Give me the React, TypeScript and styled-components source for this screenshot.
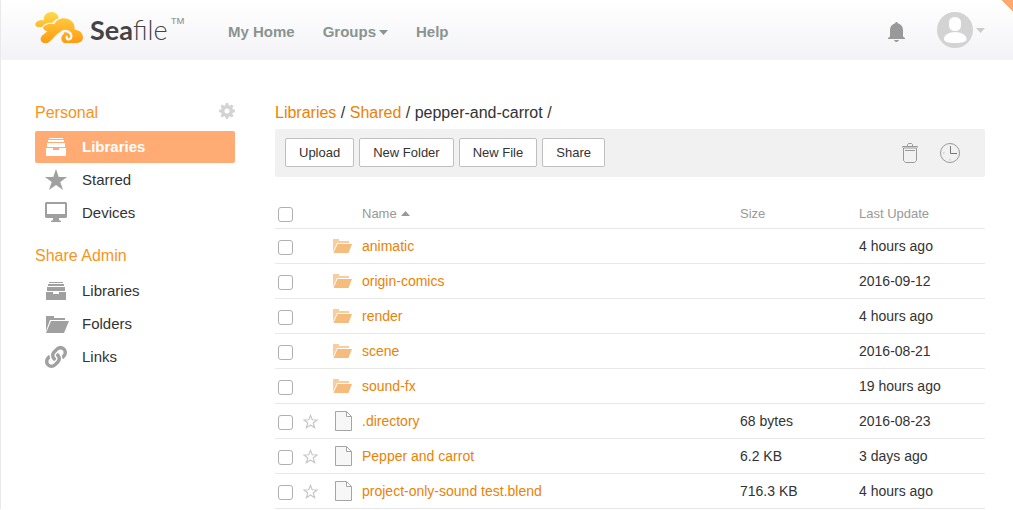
import React from "react";
import styled, { createGlobalStyle } from "styled-components";
import { FaLink } from "react-icons/fa";

const GlobalStyle = createGlobalStyle`
  *, *::before, *::after { box-sizing: border-box; }
  body {
    margin: 0;
    background: #fff;
    color: #333;
    font: 14px/20px "Liberation Sans", Arial, sans-serif;
  }
  svg { display: block; flex: none; }
  a { color: #eb8205; text-decoration: none; }
`;

const Page = styled.div`
  position: relative;
  border-left: 1px solid #e9e9ec;
  overflow: hidden;
`;

const Header = styled.header`
  display: flex;
  align-items: center;
  height: 60px;
  padding: 0 28px 0 34px;
  background: linear-gradient(#fff, #f3f3f7);
`;

const CornerFold = styled.span`
  position: absolute;
  top: 0;
  right: 0;
  width: 12px;
  height: 12px;
  background: linear-gradient(45deg, transparent 50%, #ffa870 50%);
`;

const Brand = styled.a`
  display: flex;
  align-items: center;
  gap: 7px;
  width: 193px;
  padding-bottom: 5px;
  color: #444;
  font: 300 27px/32px Lato, "Liberation Sans", sans-serif;
`;

const BrandName = styled.span`
  display: flex;
  padding-top: 4px;
  b { font-weight: 700; }
  small {
    margin-left: 2px;
    color: #999;
    font: 16px/20px "Liberation Sans", Arial, sans-serif;
  }
`;

const Nav = styled.nav`
  display: flex;
  flex: 1;
  gap: 28px;
  padding-top: 4px;
`;

const NavLink = styled.a`
  display: flex;
  align-items: center;
  gap: 3px;
  color: #8a948f;
  font-size: 15px;
  font-weight: 700;
`;

const IconButton = styled.button<{ $tone?: string }>`
  display: flex;
  align-items: center;
  gap: 3px;
  padding: 0;
  border: 0;
  background: none;
  color: ${(p) => p.$tone ?? "#999"};
  cursor: pointer;
`;

const Columns = styled.div`
  display: flex;
  gap: 40px;
  padding: 43px 28px 0 34px;
`;

const Sidebar = styled.aside`
  flex: none;
  width: 200px;
`;

const SideHeading = styled.div<{ $gap: number }>`
  display: flex;
  align-items: flex-start;
  justify-content: space-between;
  margin-bottom: ${(p) => p.$gap}px;
`;

const SideTitle = styled.h3`
  margin: 0;
  color: #f7941d;
  font-size: 16px;
  line-height: 20px;
  font-weight: 400;
`;

const SideList = styled.ul`
  display: grid;
  gap: 1px;
  margin: 0 0 17px;
  padding: 0;
  list-style: none;
`;

const SideLink = styled.a<{ $active?: boolean }>`
  display: flex;
  align-items: center;
  gap: 12px;
  height: 32px;
  padding-left: 10px;
  border-radius: 2px;
  background: ${(p) => (p.$active ? "#ffab73" : "transparent")};
  color: ${(p) => (p.$active ? "#fff" : "#333")};
  font-size: 15px;
  font-weight: ${(p) => (p.$active ? 700 : 400)};
`;

const SideIcon = styled.span<{ $active?: boolean }>`
  display: flex;
  width: 25px;
  color: ${(p) => (p.$active ? "#fff" : "#a0a0a0")};
`;

const Main = styled.main`
  flex: 1;
  min-width: 0;
`;

const Breadcrumb = styled.nav`
  margin-bottom: 6px;
  font-size: 16px;
`;

const Toolbar = styled.div`
  display: flex;
  align-items: center;
  justify-content: space-between;
  height: 48px;
  padding: 0 25px 1px 10px;
  border-radius: 2px;
  background: #f1f1f1;
`;

const ButtonGroup = styled.div<{ $gap: number }>`
  display: flex;
  align-items: center;
  gap: ${(p) => p.$gap}px;
`;

const ToolButton = styled.button`
  height: 29px;
  padding: 0 13px;
  border: 1px solid #bfbfbf;
  border-radius: 2px;
  background: #fff;
  color: #333;
  font: 13px/20px "Liberation Sans", Arial, sans-serif;
  cursor: pointer;
`;

const FileTable = styled.table`
  width: 100%;
  margin-top: 23px;
  table-layout: fixed;
  border-collapse: collapse;
`;

const Col = styled.col<{ $width?: number }>`
  width: ${(p) => (p.$width ? `${p.$width}px` : "auto")};
`;

const HeadCell = styled.th`
  height: 28px;
  padding: 0;
  border-bottom: 1px solid #e8e8e8;
  color: #999;
  font-size: 13px;
  font-weight: 400;
  text-align: left;
`;

const Cell = styled.td`
  height: 35px;
  padding: 0;
  border-bottom: 1px solid #e8e8e8;
`;

const ControlCell = styled(Cell)`
  padding-top: 2px;
`;

const SortLabel = styled.span`
  display: inline-flex;
  align-items: center;
  gap: 4px;
`;

const Check = styled.input.attrs({ type: "checkbox" })`
  display: block;
  appearance: none;
  width: 15px;
  height: 15px;
  margin: 2px 0 0 3px;
  border: 1px solid #b0b0b0;
  border-radius: 3px;
  background: #fff;
`;

const CloudLogo = () => (
  <svg width="48" height="31" viewBox="0 0 144 93" aria-hidden="true">
    <defs>
      <linearGradient id="cloudBack" x1="0" y1="0" x2="0" y2="1">
        <stop offset="0" stopColor="#ffd94f" />
        <stop offset="1" stopColor="#fdbb2c" />
      </linearGradient>
      <linearGradient id="cloudFront" x1="0" y1="0" x2="0" y2="1">
        <stop offset="0" stopColor="#ffc840" />
        <stop offset="1" stopColor="#ff9c10" />
      </linearGradient>
    </defs>
    <path fill="url(#cloudBack)" d="M9 45C2 45-1 39 2 33c3-5 9-7 16-9 3 0 6 1 8 1C25 10 36 0 49 0c12 0 21 8 22 19-9 3-15 8-19 14-12-2-23 1-31 12z" />
    <path fill="url(#cloudFront)" d="M30 93C17 93 13 79 21 71L37 58C30 57 25 52 24 46c8-10 21-13 34-9 6-15 22-22 39-17 14 4 24 17 22 33 14 0 25 11 25 23 0 11-8 17-18 17z" />
    <path fill="#f9f9fa" d="M38 93C52 84 64 62 84 56L87 65C77 71 76 86 87 93z" />
    <path fill="none" stroke="#f9f9fa" strokeWidth="7" strokeLinecap="round" d="M80 60c14-7 28 0 29 12 0 13-15 13-14 3" />
  </svg>
);

const Caret = ({ up = false }: { up?: boolean }) => (
  <svg width="9" height="5" viewBox="0 0 8 4" preserveAspectRatio="none" aria-hidden="true">
    <path fill="currentColor" d={up ? "M0 4 4 0l4 4z" : "M0 0h8L4 4z"} />
  </svg>
);

const Bell = () => (
  <svg width="17" height="24" viewBox="0 -4 17 24" fill="currentColor" aria-hidden="true">
    <path d="M7.2 1.2a1.3 1.3 0 0 1 2.6 0C13 2 15 4.500 15 8v6.500L17 16v1H0v-1l2-1.500V8c0-3.500 2-6 5.200-6.800zM6 18h5c-.5 1.300-1.300 2-2.500 2S6.500 19.300 6 18z" />
  </svg>
);

const Avatar = () => (
  <svg width="36" height="36" viewBox="0 0 36 36" aria-hidden="true">
    <circle cx="18" cy="18" r="18" fill="#d3d3d3" />
    <rect x="12" y="5" width="12" height="14" rx="5.500" fill="#fff" />
    <path fill="#fff" d="M7 27c0-4 5-7 11-7s11.500 3 11.500 7c0 3-5 4-11.500 4S7 30 7 27z" />
  </svg>
);

const Gear = () => (
  <svg width="16" height="16" viewBox="0 0 16 16" aria-hidden="true">
    <circle cx="8" cy="8" r="4.300" fill="none" stroke="#d3d3d3" strokeWidth="3.600" />
    {[0, 45, 90, 135].map((angle) => (
      <path key={angle} fill="#d3d3d3" transform={`rotate(${angle} 8 8)`} d="M6.800 0h2.400l.6 3H6.200zM6.800 16h2.400l.6-3H6.200z" />
    ))}
  </svg>
);

const Cabinet = () => (
  <svg width="22" height="18" viewBox="-1 0 22 18" fill="currentColor" aria-hidden="true">
    <path d="M3 0h14v1H3zM2 2h16v2H2zM1 5h18v4H1zM0 10h7v2h6v-2h7v8H0z" />
  </svg>
);

const Star = () => (
  <svg width="22" height="22" viewBox="0 0 22 22" fill="currentColor" aria-hidden="true">
    <path d="m11 0 2.700 8H22l-6.700 5L18 21l-7-5-7 5 2.700-8L0 8h8.300z" />
  </svg>
);

const Monitor = () => (
  <svg width="22" height="22" viewBox="0 0 22 22" fill="currentColor" aria-hidden="true">
    <path fillRule="evenodd" d="M1 0h20l1 1v14l-1 1h-7v2l2 1v1H6v-1l2-1v-2H1l-1-1V1zm1 2v10h18V2z" />
  </svg>
);

const SideFolder = () => (
  <svg width="24" height="17" viewBox="-1 0 24 17" fill="currentColor" aria-hidden="true">
    <path d="M0 0h8v2h11v2H4L0 15z" />
    <path d="M5 5h18l-5 12H0z" />
  </svg>
);

const Trash = () => (
  <svg width="16" height="20" viewBox="0 0 16 20" fill="none" stroke="#999" aria-hidden="true">
    <path d="M.5 4.500v-1h15v1M5.500 3.500v-2l1-1h3l1 1v2M1.500 5v12.500l2 2h9l2-2V5zM3 7.500h10" />
  </svg>
);

const Clock = () => (
  <svg width="20" height="20" viewBox="0 0 20 20" fill="none" stroke="#999" aria-hidden="true">
    <circle cx="10" cy="10" r="9.500" />
    <path stroke="#777" d="M10.500 3v7.500H17" />
    <path stroke="#bbb" d="M10 16v1.500M3 10h1.500" />
  </svg>
);

const TableFolder = () => (
  <svg width="19" height="14" viewBox="0 0 19 14" aria-hidden="true">
    <path fill="#f8cd9f" d="M0 0h6v2h10v2H4L0 13z" />
    <path fill="#f5bc7e" d="M4.500 5H19l-3.500 9H.5z" />
  </svg>
);

const FileIcon = () => (
  <svg width="17" height="20" viewBox="0 0 17 20" aria-hidden="true">
    <path fill="#f7f7f7" stroke="#a5a5a5" d="M.5.5h10.500l5.500 5.500v13.500H.5z" />
    <path fill="#fff" stroke="#a5a5a5" d="M11.500.5v5h5z" />
  </svg>
);

const StarOutline = () => (
  <svg width="15" height="15" viewBox="0 0 22 22" fill="none" stroke="#c6c6c6" strokeWidth="1.700" aria-hidden="true">
    <path d="m11 2 2.500 6.500 7 .3-5.500 4.400 2 6.800-6-3.900L5 20l2-6.800L1.500 8.800l7-.3z" />
  </svg>
);

const IconSlot = styled.span<{ $left: number }>`
  display: block;
  padding-left: ${(p) => p.$left}px;
`;

type SideItem = { label: string; icon: React.ReactNode; active?: boolean };

const personal: SideItem[] = [
  { label: "Libraries", icon: <Cabinet />, active: true },
  { label: "Starred", icon: <Star /> },
  { label: "Devices", icon: <Monitor /> },
];

const shareAdmin: SideItem[] = [
  { label: "Libraries", icon: <Cabinet /> },
  { label: "Folders", icon: <SideFolder /> },
  { label: "Links", icon: <FaLink size={22} /> },
];

const SideNav = ({ items }: { items: SideItem[] }) => (
  <SideList>
    {items.map((item) => (
      <li key={item.label}>
        <SideLink href="#" $active={item.active}>
          <SideIcon $active={item.active}>{item.icon}</SideIcon>
          {item.label}
        </SideLink>
      </li>
    ))}
  </SideList>
);

type Entry = { name: string; size?: string; updated: string };

const entries: Entry[] = [
  { name: "animatic", updated: "4 hours ago" },
  { name: "origin-comics", updated: "2016-09-12" },
  { name: "render", updated: "4 hours ago" },
  { name: "scene", updated: "2016-08-21" },
  { name: "sound-fx", updated: "19 hours ago" },
  { name: ".directory", size: "68 bytes", updated: "2016-08-23" },
  { name: "Pepper and carrot", size: "6.2 KB", updated: "3 days ago" },
  { name: "project-only-sound test.blend", size: "716.3 KB", updated: "4 hours ago" },
];

export default function App() {
  return (
    <Page>
      <GlobalStyle />
      <Header>
        <Brand href="#">
          <CloudLogo />
          <BrandName>
            <b>Sea</b>file<small>™</small>
          </BrandName>
        </Brand>
        <Nav>
          <NavLink href="#">My Home</NavLink>
          <NavLink href="#">
            Groups <Caret />
          </NavLink>
          <NavLink href="#">Help</NavLink>
        </Nav>
        <ButtonGroup $gap={32}>
          <IconButton aria-label="Notifications">
            <Bell />
          </IconButton>
          <IconButton aria-label="Account" $tone="#ccc">
            <Avatar />
            <Caret />
          </IconButton>
        </ButtonGroup>
      </Header>
      <CornerFold />
      <Columns>
        <Sidebar>
          <SideHeading $gap={8}>
            <SideTitle>Personal</SideTitle>
            <IconButton aria-label="Settings">
              <Gear />
            </IconButton>
          </SideHeading>
          <SideNav items={personal} />
          <SideHeading $gap={9}>
            <SideTitle>Share Admin</SideTitle>
          </SideHeading>
          <SideNav items={shareAdmin} />
        </Sidebar>
        <Main>
          <Breadcrumb aria-label="Path">
            <a href="#">Libraries</a> / <a href="#">Shared</a> / pepper-and-carrot /
          </Breadcrumb>
          <Toolbar>
            <ButtonGroup $gap={5}>
              <ToolButton>Upload</ToolButton>
              <ToolButton>New Folder</ToolButton>
              <ToolButton>New File</ToolButton>
              <ToolButton>Share</ToolButton>
            </ButtonGroup>
            <ButtonGroup $gap={22}>
              <IconButton aria-label="Trash">
                <Trash />
              </IconButton>
              <IconButton aria-label="History">
                <Clock />
              </IconButton>
            </ButtonGroup>
          </Toolbar>
          <FileTable>
            <colgroup>
              <Col $width={28} />
              <Col $width={27} />
              <Col $width={32} />
              <Col />
              <Col $width={119} />
              <Col $width={126} />
            </colgroup>
            <thead>
              <tr>
                <HeadCell>
                  <Check aria-label="Select all" />
                </HeadCell>
                <HeadCell />
                <HeadCell />
                <HeadCell>
                  <SortLabel>
                    Name <Caret up />
                  </SortLabel>
                </HeadCell>
                <HeadCell>Size</HeadCell>
                <HeadCell>Last Update</HeadCell>
              </tr>
            </thead>
            <tbody>
              {entries.map((entry) => (
                <tr key={entry.name}>
                  <ControlCell>
                    <Check aria-label={`Select ${entry.name}`} />
                  </ControlCell>
                  <ControlCell>
                    {entry.size && (
                      <IconButton aria-label={`Star ${entry.name}`}>
                        <StarOutline />
                      </IconButton>
                    )}
                  </ControlCell>
                  <Cell>
                    <IconSlot $left={entry.size ? 5 : 3}>{entry.size ? <FileIcon /> : <TableFolder />}</IconSlot>
                  </Cell>
                  <Cell>
                    <a href="#">{entry.name}</a>
                  </Cell>
                  <Cell>{entry.size}</Cell>
                  <Cell>{entry.updated}</Cell>
                </tr>
              ))}
            </tbody>
          </FileTable>
        </Main>
      </Columns>
    </Page>
  );
}
